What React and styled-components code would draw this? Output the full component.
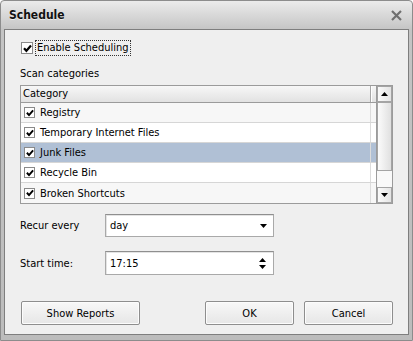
import React from 'react';
import styled, { createGlobalStyle } from 'styled-components';

const Global = createGlobalStyle`
  html, body { margin: 0; padding: 0; background: #ffffff; }
  body { font-family: "DejaVu Sans Condensed", "Liberation Sans", sans-serif; font-size: 11px; color: #000; }
  * { box-sizing: border-box; }
`;

const Window = styled.div`
  width: 413px;
  height: 341px;
  display: flex;
  flex-direction: column;
  border: 1px solid #8c8c8c;
  border-radius: 4px 4px 0 0;
  background: linear-gradient(#ebebeb 0px, #c4c4c4 29px, #bcbcbc 100%);
  padding: 0 3px 5px 3px;
`;

const TitleBar = styled.div`
  height: 28px;
  display: flex;
  align-items: center;
  justify-content: space-between;
  padding: 0 7px 0 5px;
`;

const Title = styled.div`
  font-weight: bold;
  font-size: 12px;
  color: #111;
  text-shadow: 0 1px 0 rgba(255,255,255,0.6);
`;

const Content = styled.div`
  flex: 1;
  background: #efefef;
  border: 1px solid #7e7e7e;
  padding: 10px 15px 0 15px;
  display: flex;
  flex-direction: column;
`;

const CheckRow = styled.label`
  display: flex;
  align-items: center;
  height: 16px;
  margin-left: 1px;
`;

const Box = styled.span`
  width: ${p => p.size}px;
  height: ${p => p.size}px;
  border: 1px solid #8a8a8a;
  background: #fff;
  display: inline-flex;
  align-items: center;
  justify-content: center;
  flex: none;
`;

const Focus = styled.span`
  margin-left: 2px;
  padding: 0 1px;
  border: 1px dotted #333;
  height: 16px;
  line-height: 14px;
`;

const Label = styled.div`
  margin-top: ${p => p.mt || 0}px;
  height: 14px;
  line-height: 14px;
`;

const List = styled.div`
  margin-top: 4px;
  width: 373px;
  height: 119px;
  border: 1px solid #9b9b9b;
  display: flex;
  background: #fff;
`;

const Table = styled.div`
  flex: 1;
  display: flex;
  flex-direction: column;
`;

const Header = styled.div`
  height: 17px;
  border-bottom: 1px solid #9b9b9b;
  background: linear-gradient(#f7f7f7, #e2e2e2);
  display: flex;
`;

const HeadCell = styled.div`
  width: 350px;
  padding-left: 2px;
  line-height: 16px;
  border-right: 1px solid #a8a8a8;
  box-shadow: 1px 0 0 #fff;
`;

const Row = styled.div`
  height: 20px;
  border-bottom: ${p => (p.last ? 'none' : '1px solid #d6d6d6')};
  background: ${p => (p.selected ? '#b0c0d5' : p.shade ? '#f7f7f7' : '#ffffff')};
  display: flex;
`;

const Cell = styled.div`
  width: 350px;
  border-right: 1px solid #dcdcdc;
  display: flex;
  align-items: center;
  padding-left: 3px;
  gap: 5px;
`;

const ScrollBar = styled.div`
  width: 16px;
  display: flex;
  flex-direction: column;
  background: #f7f7f7;
  border-left: 1px solid #9b9b9b;
`;

const ScrollBtn = styled.div`
  height: 16px;
  border: 1px solid #a4a4a4;
  background: linear-gradient(90deg, #fafafa, #e4e4e4);
  display: flex;
  align-items: center;
  justify-content: center;
`;

const Thumb = styled.div`
  height: 69px;
  border: 1px solid #a4a4a4;
  background: linear-gradient(90deg, #fbfbfb, #e0e0e0);
`;

const Track = styled.div`
  flex: 1;
  background: #f9f9f9;
`;

const FieldRow = styled.div`
  display: flex;
  align-items: center;
  margin-top: ${p => p.mt}px;
`;

const FieldLabel = styled.div`
  width: 85px;
`;

const Field = styled.div`
  width: 169px;
  height: ${p => p.h}px;
  background: #fff;
  border: 1px solid #a9a9a9;
  border-top-color: #8f8f8f;
  box-shadow: inset 1px 1px 0 #e4e4e4;
  display: flex;
  align-items: center;
  justify-content: space-between;
  padding: 0 6px 0 4px;
`;

const Spin = styled.div`
  display: flex;
  flex-direction: column;
  gap: 3px;
  margin-right: 1px;
`;

const Buttons = styled.div`
  display: flex;
  margin-top: 26px;
  margin-left: 1px;
`;

const Button = styled.button`
  width: ${p => p.w}px;
  height: 24px;
  margin-left: ${p => p.ml || 0}px;
  border: 1px solid #8e8e8e;
  border-radius: 2px;
  background: linear-gradient(#f8f8f8, #e6e6e6);
  box-shadow: inset 0 0 0 1px #fcfcfc;
  font-family: inherit;
  font-size: inherit;
  color: #000;
  padding: 0;
`;

const Check = ({ s = 9 }) => (
  <svg width={s} height={s} viewBox="0 0 9 9">
    <path d="M1 4.2 L3.4 6.8 L8 1.6" fill="none" stroke="#000" strokeWidth="2.2" />
  </svg>
);

const Tri = ({ down }) => (
  <svg width="7" height="4" viewBox="0 0 7 4">
    <path d={down ? 'M0 0 H7 L3.5 4 Z' : 'M0 4 H7 L3.5 0 Z'} fill="#000" />
  </svg>
);

const CloseX = () => (
  <svg width="11" height="11" viewBox="0 0 11 11">
    <path d="M1 1 L10 10 M10 1 L1 10" stroke="#6f6f6f" strokeWidth="2.2" />
  </svg>
);

const items = ['Registry', 'Temporary Internet Files', 'Junk Files', 'Recycle Bin', 'Broken Shortcuts'];

export default function App() {
  return (
    <>
      <Global />
      <Window>
        <TitleBar>
          <Title>Schedule</Title>
          <CloseX />
        </TitleBar>
        <Content>
          <CheckRow>
            <Box size={12}><Check s={9} /></Box>
            <Focus>Enable Scheduling</Focus>
          </CheckRow>
          <Label mt={11}>Scan categories</Label>
          <List>
            <Table>
              <Header><HeadCell>Category</HeadCell></Header>
              {items.map((t, i) => (
                <Row key={t} selected={i === 2} shade={i === 0 || i === 4} last={i === 4}>
                  <Cell>
                    <Box size={11}><Check s={8} /></Box>
                    {t}
                  </Cell>
                </Row>
              ))}
            </Table>
            <ScrollBar>
              <ScrollBtn><Tri /></ScrollBtn>
              <Thumb />
              <Track />
              <ScrollBtn><Tri down /></ScrollBtn>
            </ScrollBar>
          </List>
          <FieldRow mt={10}>
            <FieldLabel>Recur every</FieldLabel>
            <Field h={23}>day<Tri down /></Field>
          </FieldRow>
          <FieldRow mt={14}>
            <FieldLabel>Start time:</FieldLabel>
            <Field h={24}>17:15<Spin><Tri /><Tri down /></Spin></Field>
          </FieldRow>
          <Buttons>
            <Button w={119}>Show Reports</Button>
            <Button w={89} ml={65}>OK</Button>
            <Button w={89} ml={10}>Cancel</Button>
          </Buttons>
        </Content>
      </Window>
    </>
  );
}
